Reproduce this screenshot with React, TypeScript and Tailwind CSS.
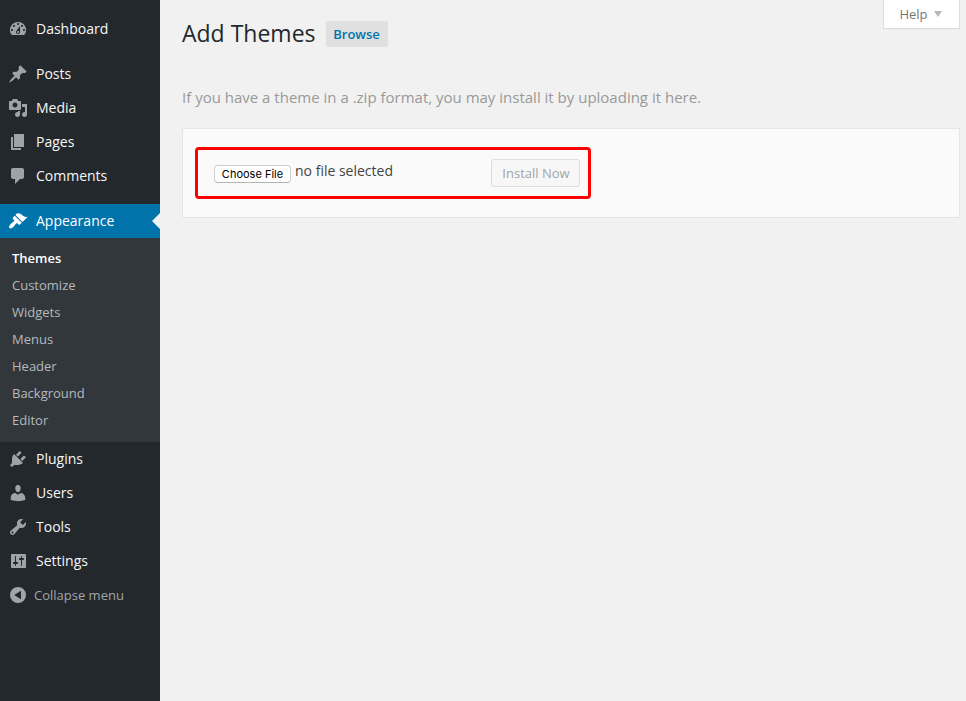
import type { ReactNode } from "react";

const icons = {
  dashboard:
    "M3.76 16h12.48A7.998 7.998 0 0 0 10 3a7.998 7.998 0 0 0-6.24 13zM10 4c.55 0 1 .45 1 1s-.45 1-1 1-1-.45-1-1 .45-1 1-1zM6 6c.55 0 1 .45 1 1s-.45 1-1 1-1-.45-1-1 .45-1 1-1zm8 0c.55 0 1 .45 1 1s-.45 1-1 1-1-.45-1-1 .45-1 1-1zm-5.37 5.55L12 7v6c0 1.1-.9 2-2 2s-2-.9-2-2c0-.57.24-1.08.63-1.45zM4 10c.55 0 1 .45 1 1s-.45 1-1 1-1-.45-1-1 .45-1 1-1zm12 0c.55 0 1 .45 1 1s-.45 1-1 1-1-.45-1-1 .45-1 1-1zm-5 3c0-.55-.45-1-1-1s-1 .45-1 1 .45 1 1 1 1-.45 1-1z",
  posts:
    "M10.44 3.02l1.82-1.82 6.36 6.35-1.83 1.82c-1.05-.68-2.48-.57-3.41.36l-.75.75c-.92.93-1.04 2.35-.35 3.41l-1.83 1.82-2.41-2.41-2.8 2.79c-.42.42-3.38 2.71-3.8 2.29s1.86-3.39 2.28-3.81l2.79-2.79L4.1 9.36l1.83-1.82c1.05.69 2.48.57 3.4-.36l.75-.75c.93-.92 1.05-2.35.36-3.41z",
  media:
    "M13 11V4c0-.55-.45-1-1-1h-1.67L9 1H5L3.67 3H2c-.55 0-1 .45-1 1v7c0 .55.45 1 1 1h10c.55 0 1-.45 1-1zM7 4.5c1.38 0 2.5 1.12 2.5 2.5S8.38 9.5 7 9.5 4.5 8.38 4.5 7 5.62 4.5 7 4.5zM14 6h5v10.5c0 1.38-1.12 2.5-2.5 2.5S14 17.88 14 16.5s1.12-2.5 2.5-2.5c.17 0 .34.02.5.05V9h-3V6zm-4 8.05V13h2v3.5c0 1.38-1.12 2.5-2.5 2.5S7 17.88 7 16.5 8.12 14 9.5 14c.17 0 .34.02.5.05z",
  pages: "M6 15V2h10v13H6zm-1 1h8v2H3V5h2v11z",
  comments:
    "M5 2h9c1.1 0 2 .9 2 2v7c0 1.1-.9 2-2 2h-2l-5 5v-5H5c-1.1 0-2-.9-2-2V4c0-1.1.9-2 2-2z",
  appearance:
    "M14.48 11.06L7.41 3.99l1.5-1.5c.5-.56 2.3-.47 3.51.32 1.21.8 1.43 1.28 2.91 2.1 1.18.64 2.45 1.26 4.45.85zm-.71.71L6.7 4.7 4.93 6.47c-.39.39-.39 1.02 0 1.41l1.06 1.06c.39.39.39 1.03 0 1.42-.6.6-1.43 1.11-2.21 1.69-.35.26-.7.53-1.01.84C1.43 14.23.4 16.08 1.4 17.07c.99 1 2.84-.03 4.18-1.36.31-.31.58-.66.85-1.02.57-.78 1.08-1.61 1.69-2.21.39-.39 1.02-.39 1.41 0l1.06 1.06c.39.39 1.02.39 1.41 0z",
  plugins:
    "M13.11 4.36L9.87 7.6 8 5.73l3.24-3.24c.35-.34 1.05-.2 1.56.32.52.51.66 1.21.31 1.55zm-8 1.77l.91-1.12 9.01 9.01-1.19.84c-.71.71-2.63 1.16-3.82 1.16H6.14L4.9 17.26c-.59.59-1.54.59-2.12 0-.59-.58-.59-1.53 0-2.12l1.24-1.24v-3.88c0-1.13.4-3.19 1.09-3.89zm7.26 3.97l3.24-3.24c.34-.35 1.04-.21 1.55.31.52.51.66 1.21.31 1.55l-3.24 3.25z",
  users:
    "M10 9.25c-2.27 0-2.73-3.44-2.73-3.44C7 4.02 7.82 2 9.97 2c2.16 0 2.98 2.02 2.71 3.81 0 0-.41 3.44-2.68 3.44zm0 2.57L12.72 10c2.39 0 4.52 2.33 4.52 4.53v2.49s-3.65 1.13-7.24 1.13c-3.65 0-7.24-1.13-7.24-1.13v-2.49c0-2.25 1.94-4.48 4.47-4.48z",
  tools:
    "M16.68 9.77c-1.34 1.34-3.3 1.67-4.95.99l-5.41 6.52c-.99.99-2.59.99-3.58 0s-.99-2.59 0-3.57l6.52-5.42c-.68-1.65-.35-3.61.99-4.95 1.28-1.28 3.12-1.62 4.72-1.06l-2.89 2.89 2.82 2.82 2.86-2.87c.53 1.58.18 3.39-1.08 4.65zM3.81 16.21c.4.39 1.04.39 1.43 0 .4-.4.4-1.04 0-1.43-.39-.4-1.03-.4-1.43 0-.39.39-.39 1.03 0 1.43z",
  settings:
    "M18 16V4c0-.55-.45-1-1-1H4c-.55 0-1 .45-1 1v12c0 .55.45 1 1 1h13c.55 0 1-.45 1-1zM8 11h1c.55 0 1 .45 1 1s-.45 1-1 1H8v1.5c0 .28-.22.5-.5.5s-.5-.22-.5-.5V13H6c-.55 0-1-.45-1-1s.45-1 1-1h1V5.5c0-.28.22-.5.5-.5s.5.22.5.5V11zm5-2h-1c-.55 0-1-.45-1-1s.45-1 1-1h1V5.5c0-.28.22-.5.5-.5s.5.22.5.5V7h1c.55 0 1 .45 1 1s-.45 1-1 1h-1v5.5c0 .28-.22.5-.5.5s-.5-.22-.5-.5V9z",
  collapse: "M10 2a8 8 0 1 1 0 16 8 8 0 0 1 0-16zm3 12.2V5.8L6.2 10z",
};

type IconName = keyof typeof icons;

function Icon({ name }: { name: IconName }) {
  return (
    <svg viewBox="0 0 20 20" className="size-5 shrink-0 fill-current" fillRule="evenodd" aria-hidden="true">
      <path d={icons[name]} />
    </svg>
  );
}

function MenuItem({ icon, children }: { icon: IconName; children: ReactNode }) {
  return (
    <a className="flex h-[34px] items-center gap-2 pl-2 text-[#9ea3a8]">
      <Icon name={icon} />
      <span className="text-sm text-[#f6f6f6]">{children}</span>
    </a>
  );
}

const submenu = ["Customize", "Widgets", "Menus", "Header", "Background", "Editor"];

function Sidebar() {
  return (
    <nav className="w-40 shrink-0 bg-[#23282d] pt-3">
      <MenuItem icon="dashboard">Dashboard</MenuItem>
      <div className="pt-[11px]">
        <MenuItem icon="posts">Posts</MenuItem>
        <MenuItem icon="media">Media</MenuItem>
        <MenuItem icon="pages">Pages</MenuItem>
        <MenuItem icon="comments">Comments</MenuItem>
      </div>
      <a className="mt-[11px] flex h-[34px] items-center gap-2 bg-[#0073aa] pl-2 text-white">
        <Icon name="appearance" />
        <span className="grow text-sm">Appearance</span>
        <span className="size-0 border-y-8 border-r-8 border-y-transparent border-r-[#f1f1f1]" />
      </a>
      <div className="flex h-[204px] flex-col bg-[#32373c] pt-[7px] pl-3 text-[13px] leading-[27px] text-[#b4b9be]">
        <a className="font-semibold text-white">Themes</a>
        {submenu.map((label) => (
          <a key={label}>{label}</a>
        ))}
      </div>
      <MenuItem icon="plugins">Plugins</MenuItem>
      <MenuItem icon="users">Users</MenuItem>
      <MenuItem icon="tools">Tools</MenuItem>
      <MenuItem icon="settings">Settings</MenuItem>
      <a className="flex h-[34px] items-center gap-1.5 pl-2 text-[13px] text-[#a0a5aa]">
        <Icon name="collapse" />
        <span className="pt-0.5">Collapse menu</span>
      </a>
    </nav>
  );
}

export default function App() {
  return (
    <div className="flex h-[701px] w-[966px] overflow-hidden bg-[#f1f1f1] font-['Open_Sans',sans-serif] text-[#444]">
      <Sidebar />
      <main className="min-w-0 grow pr-1.5 pl-[22px]">
        <header className="flex items-start justify-between">
          <div className="flex items-start gap-2.5 pt-4">
            <h1 className="text-[23px] leading-[34px] text-[#23282d]">Add Themes</h1>
            <a className="mt-[5px] flex h-[26px] w-[62px] items-center justify-center rounded-xs bg-[#e0e0e0] pt-0.5 text-[13px] font-semibold text-[#0073aa]">
              Browse
            </a>
          </div>
          <button className="flex h-[29px] w-[77px] items-center justify-center gap-1.5 border border-t-0 border-[#ddd] bg-white pr-0.5 text-[13px] text-[#72777c] shadow-[0_1px_1px_-1px_rgba(0,0,0,0.1)]">
            <span className="pt-0.5">Help</span>
            <span className="mb-px size-0 border-x-[4.5px] border-t-[6px] border-x-transparent border-t-[#b4b9be]" />
          </button>
        </header>
        <p className="mt-[35px] text-[15px] leading-6 text-[#999]">
          If you have a theme in a .zip format, you may install it by uploading it here.
        </p>
        <section className="mt-[19px] h-[90px] border border-[#e5e5e5] bg-[#fafafa] pt-[18px] pl-3">
          <div className="flex h-[52px] w-[396px] items-start rounded border-3 border-[#f00] pl-4">
            <button className="mt-[15px] h-[18px] w-[77px] rounded border border-[#cfcfcf] border-b-[#b4b4b4] bg-white font-['Inter',sans-serif] text-[11px] leading-4 whitespace-nowrap text-black">
              Choose File
            </button>
            <span className="mt-[11px] ml-1 grow text-sm leading-5">no file selected</span>
            <button className="mt-[9px] mr-2 h-7 w-[89px] rounded-[3px] border border-[#ddd] bg-[#f7f7f7] pt-0.5 pl-[7px] text-[13px] text-[#a0a5aa] pr-1.5">
              Install Now
            </button>
          </div>
        </section>
      </main>
    </div>
  );
}
